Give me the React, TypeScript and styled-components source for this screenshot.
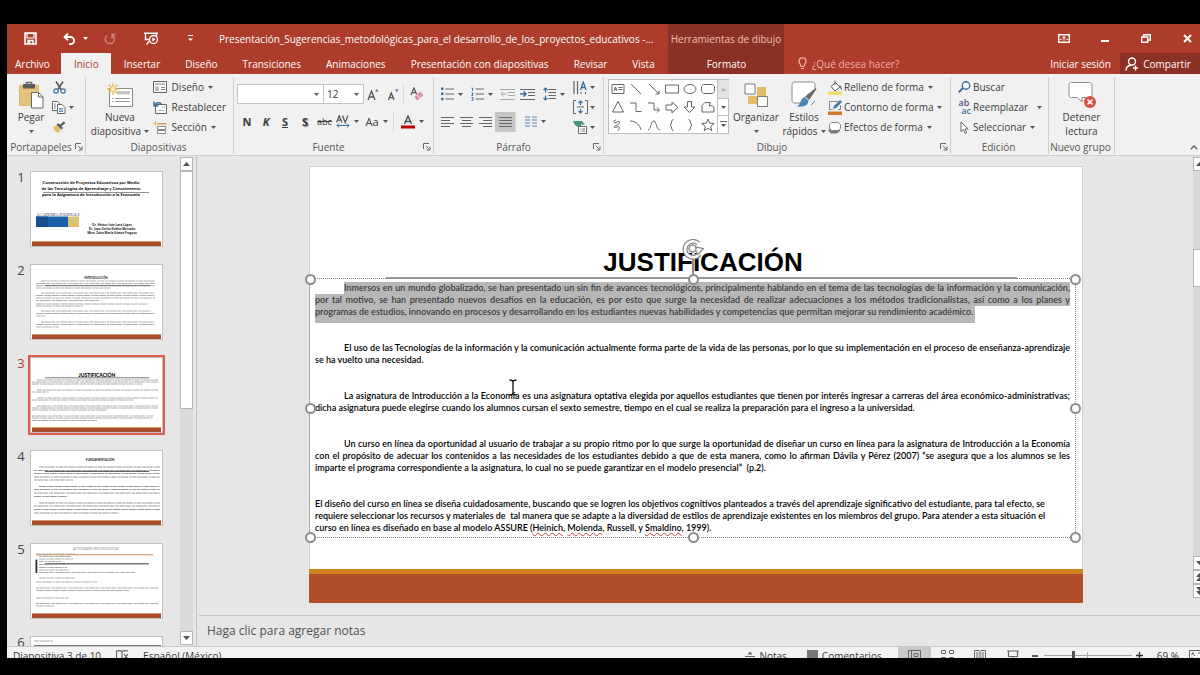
import React from 'react';
import styled, { createGlobalStyle, css } from 'styled-components';

const c = {
  red: '#ad3c2b',
  redDark: '#8b3024',
  ribbon: '#f1f1f1',
  work: '#e6e6e6',
  line: '#cfcfcf',
  ink: '#3b3b3b',
  icon: '#666666',
  blue: '#3d6f9e',
  gold: '#e3bd66',
  brick: '#b04e2b',
  ochre: '#cf8420',
};

const Global = createGlobalStyle`
  * { box-sizing: border-box; }
  body { margin: 0; background: #000; font-family: "Open Sans", "Noto Sans", sans-serif; font-size: 10px; line-height: 14px; color: ${c.ink}; }
  button, input, select, textarea { font: inherit; color: inherit; margin: 0; padding: 0; border: 0; background: none; border-radius: 0; outline: 0; }
  button { display: flex; align-items: center; justify-content: center; white-space: nowrap; }
  svg { display: block; flex: none; }
`;

/* ---------- frame ---------- */

const Page = styled.div`
  height: 100vh;
  padding: 24px 0 17px 7px;
  background: #000;
  overflow: hidden;
`;
const Window = styled.div`
  display: flex;
  flex-direction: column;
  height: 100%;
  background: ${c.work};
  overflow: hidden;
`;

/* ---------- header ---------- */

const Header = styled.header`
  display: grid;
  grid-template-columns: 661px 116px 1fr;
  grid-template-rows: 29px 21px;
  background: ${c.red};
  color: #fff;
`;
const QuickBar = styled.div`
  display: flex;
  align-items: center;
`;
const QuickButton = styled.button<{ $w: number; $dim?: boolean }>`
  width: ${(p) => p.$w}px;
  height: 28px;
  gap: 7px;
  opacity: ${(p) => (p.$dim ? 0.35 : 1)};
`;
const DocTitle = styled.h1`
  margin: 0 0 0 17px;
  font-size: 10px;
  line-height: 28px;
  font-weight: 400;
  white-space: nowrap;
`;
const Context = styled.div`
  grid-row: 1 / 3;
  grid-column: 2;
  display: grid;
  grid-template-rows: 29px 21px;
  justify-items: center;
  align-items: center;
  background: ${c.redDark};
  color: #f1c0b6;
`;
const WindowControls = styled.div`
  display: flex;
  justify-content: flex-end;
  align-items: center;
  gap: 15px;
`;
const WindowButton = styled.button`
  width: 26px;
  height: 28px;
`;
const Tabs = styled.nav`
  grid-row: 2;
  grid-column: 1;
  display: flex;
`;
const Tab = styled.button<{ $active?: boolean; $first?: boolean }>`
  padding: ${(p) => (p.$first ? '0 11px 0 8px' : '0 12px 0 13px')};
  height: 21px;
  color: #fff;
  ${(p) =>
    p.$active &&
    css`
      background: ${c.ribbon};
      color: ${c.red};
    `}
`;
const TabsRight = styled.div`
  display: flex;
  align-items: center;
  padding-left: 14px;
`;
const TellMe = styled.label`
  display: flex;
  align-items: center;
  gap: 5px;
  flex: 1;
  min-width: 0;
  input {
    width: 120px;
    height: 20px;
  }
  input::placeholder {
    color: #efb3a8;
    opacity: 1;
  }
`;
const Account = styled.button`
  margin-right: 9px;
`;
const Share = styled.button`
  width: 80px;
  height: 21px;
  gap: 4px;
  padding-right: 4px;
  background: ${c.redDark};
`;

/* ---------- ribbon ---------- */

const Ribbon = styled.div`
  display: flex;
  height: 82px;
  padding-top: 3px;
  background: ${c.ribbon};
  border-bottom: 1px solid ${c.line};
`;
const Group = styled.section<{ $w: number }>`
  position: relative;
  flex: none;
  display: flex;
  flex-direction: column;
  width: ${(p) => p.$w}px;
  border-right: 1px solid ${c.line};
  margin-bottom: 1px;
`;
const GroupBody = styled.div<{ $left?: number }>`
  display: flex;
  height: 64px;
  padding-left: ${(p) => p.$left ?? 0}px;
`;
const GroupFoot = styled.div`
  display: flex;
  align-items: center;
  height: 14px;
  padding-right: 2px;
  color: #555;
  span {
    flex: 1;
    text-align: center;
    white-space: nowrap;
  }
`;
const BigButton = styled.button<{ $w: number }>`
  flex-direction: column;
  justify-content: flex-start;
  width: ${(p) => p.$w}px;
  padding-top: 3px;
`;
const BigIcon = styled.span`
  display: flex;
  align-items: center;
  justify-content: center;
  height: 30px;
`;
const BigLine = styled.span`
  display: flex;
  align-items: center;
  justify-content: center;
  gap: 3px;
  height: 14px;
`;
const Stack = styled.div<{ $ml?: number }>`
  display: flex;
  flex-direction: column;
  margin-left: ${(p) => p.$ml ?? 0}px;
`;
const SmallButton = styled.button`
  justify-content: flex-start;
  height: 20px;
  gap: 4px;
`;
const SmallIcon = styled.span<{ $w?: number }>`
  display: flex;
  align-items: center;
  justify-content: center;
  width: ${(p) => p.$w ?? 14}px;
  margin-right: -2px;
`;
const Strip = styled.div<{ $h?: number }>`
  display: flex;
  align-items: center;
  height: ${(p) => p.$h ?? 28}px;
`;
const Tool = styled.button<{ $w: number; $on?: boolean }>`
  width: ${(p) => p.$w}px;
  height: 20px;
  gap: 4px;
  background: ${(p) => (p.$on ? '#c6c6c6' : 'none')};
`;
const Glyph = styled.span<{ $bold?: boolean; $italic?: boolean; $line?: string; $shadow?: boolean; $size?: number }>`
  font-size: ${(p) => p.$size ?? 11}px;
  font-weight: ${(p) => (p.$bold ? 700 : 400)};
  font-style: ${(p) => (p.$italic ? 'italic' : 'normal')};
  text-decoration: ${(p) => p.$line ?? 'none'};
  text-shadow: ${(p) => (p.$shadow ? '1px 1px 1px #888' : 'none')};
`;
const Rule = styled.i`
  width: 1px;
  height: 20px;
  background: #d8d8d8;
`;
const Combo = styled.div<{ $w: number }>`
  display: flex;
  align-items: center;
  width: ${(p) => p.$w}px;
  height: 20px;
  padding: 0 4px 0 3px;
  margin-right: -1px;
  background: #fff;
  border: 1px solid #c3c3c3;
  select {
    flex: 1;
    min-width: 0;
    appearance: none;
  }
`;
const Gallery = styled.div`
  display: grid;
  grid-template-columns: repeat(6, 18px) 12px;
  width: 121px;
  height: 55px;
  margin: 2px 3px 0 4px;
  background: #fff;
  border: 1px solid #bdbdbd;
`;
const Shapes = styled.div`
  grid-column: 1 / 7;
  display: grid;
  grid-template-columns: repeat(6, 18px);
  grid-auto-rows: 18px;
  button {
    width: 18px;
  }
`;
const GalleryScroll = styled.div`
  display: grid;
  grid-template-rows: 18px 17px 18px;
  border-left: 1px solid #bdbdbd;
  button + button {
    border-top: 1px solid #bdbdbd;
  }
  button:first-child {
    background: #e2e2e2;
  }
`;
const Collapse = styled.button`
  margin: auto 0 2px auto;
  width: 13px;
  height: 12px;
`;

/* ---------- work area ---------- */

const Work = styled.main`
  flex: 1;
  display: flex;
  min-height: 0;
`;
const Sidebar = styled.aside`
  flex: none;
  display: flex;
  width: 190px;
  border-right: 1px solid #c4c4c4;
`;
const ThumbList = styled.ol`
  flex: 1;
  display: flex;
  flex-direction: column;
  gap: 17px;
  margin: 0;
  padding: 15px 0 0;
  list-style: none;
  overflow: hidden;
`;
const ThumbItem = styled.li<{ $on?: boolean }>`
  flex: none;
  display: grid;
  grid-template-columns: 23px 133px;
  height: 76px;
  font-size: 13px;
  line-height: 12px;
  color: ${(p) => (p.$on ? '#c0392b' : '#444')};
  > span {
    justify-self: center;
    padding-left: 5px;
  }
`;
const Thumb = styled.button<{ $on?: boolean }>`
  width: 133px;
  height: 76px;
  background: #fff;
  border: 1px solid #c4bfb8;
  outline: ${(p) => (p.$on ? '2px solid #dc5d4b' : '0')};
`;
const Rail = styled.div`
  display: flex;
  flex-direction: column;
  width: 13px;
  margin: 1px 3px 1px 0;
  background: #d9d9d9;
`;
const RailButton = styled.button`
  flex: none;
  height: 14px;
  width: 13px;
  background: #fdfdfd;
  border: 1px solid #b5b5b5;
`;
const RailThumb = styled.div<{ $before?: number; $size: number; $after: number }>`
  flex: 1;
  display: grid;
  grid-template-rows: ${(p) => `${p.$before ?? 0}fr ${p.$size}fr ${p.$after}fr`};
  &::before {
    content: '';
    grid-row: 2;
    background: #fff;
    border: 1px solid #b5b5b5;
  }
`;
const Editor = styled.section`
  flex: 1;
  display: flex;
  flex-direction: column;
  min-width: 0;
  margin-left: 2px;
`;
const Canvas = styled.div`
  flex: 1;
  display: flex;
  min-height: 0;
`;
const Stage = styled.div`
  flex: 1;
  display: flex;
  justify-content: center;
  align-items: flex-start;
  padding-top: 10px;
`;
const ClippedRail = styled.div`
  flex: none;
  width: 7px;
  padding-bottom: 16px;
  overflow: hidden;
  display: flex;
`;
const Notes = styled.textarea`
  display: block;
  height: 31px;
  padding: 7px 8px;
  border-top: 1px solid #c4c4c4;
  font-size: 12px;
  line-height: 16px;
  resize: none;
  overflow: hidden;
  &::placeholder {
    color: #505050;
    opacity: 1;
  }
`;

/* ---------- slide ---------- */

const Slide = styled.article`
  display: flex;
  flex-direction: column;
  width: calc(100% - 220px);
  height: 437px;
  background: #fff;
  border: 1px solid #cfcfcf;
  color: #000;
`;
const SlideTitle = styled.h2`
  margin: 80px 65px 0 76px;
  padding-left: 3px;
  border-bottom: 2px solid #9c9c9c;
  font: 700 26px/30px 'Liberation Sans', Arial, sans-serif;
  text-align: center;
`;
const TextBox = styled.div`
  position: relative;
  display: flex;
  flex-direction: column;
  gap: 24px;
  height: 260px;
  margin: -1px 6px 0 -1px;
  padding: 3px 5px;
  border: 1px dotted #8a8a8a;
  font: 600 9px/12px Lato, Carlito, sans-serif;
`;
const Para = styled.p<{ $marked?: boolean }>`
  margin: 0;
  color: ${(p) => (p.$marked ? '#3c3c3c' : '#000')};
`;
const Line = styled.span<{ $indent?: boolean; $full?: boolean; $marked?: boolean; $tail?: boolean }>`
  display: block;
  white-space: pre-wrap;
  ${(p) =>
    p.$full &&
    css`
      text-align: justify;
      text-align-last: justify;
    `}
  ${(p) => p.$indent && 'margin-left: 29px;'}
  ${(p) => p.$marked && 'background: #b7b7b7;'}
  ${(p) =>
    p.$tail &&
    css`
      width: fit-content;
      padding: 0 2px 5px 0;
      margin-bottom: -5px;
    `}
`;
const Misspelt = styled.u`
  text-decoration: underline wavy #c8404a 1px;
  text-underline-offset: 1px;
`;
const Handle = styled.i<{ $x: number; $y: number }>`
  position: absolute;
  left: ${(p) => p.$x}%;
  top: ${(p) => p.$y}%;
  width: 11px;
  height: 11px;
  margin: -5px;
  background: #fff;
  border: 2px solid #8c8c8c;
  border-radius: 50%;
`;
const Rotator = styled.svg`
  position: absolute;
  left: 50%;
  top: -40px;
  margin-left: -11px;
`;
const Beam = styled.svg`
  position: absolute;
  left: 199px;
  top: 100px;
`;
const Floor = styled.div`
  margin: auto -1px -1px;
  height: 34px;
  background: ${c.brick};
  border-top: 5px solid ${c.ochre};
`;

/* ---------- status bar ---------- */

const Status = styled.footer`
  flex: none;
  height: 12px;
  background: #f3f3f3;
  border-top: 1px solid #c9c9c9;
  overflow: hidden;
`;
const StatusRow = styled.div`
  display: flex;
  align-items: center;
  height: 17px;
  padding-left: 6px;
`;
const StatusButton = styled.button<{ $w?: number; $on?: boolean; $mr?: number }>`
  height: 17px;
  gap: 4px;
  width: ${(p) => (p.$w ? `${p.$w}px` : 'auto')};
  margin-right: ${(p) => p.$mr ?? 0}px;
  background: ${(p) => (p.$on ? '#c9c9c9' : 'none')};
`;
const Spacer = styled.span`
  flex: 1;
`;
const Zoom = styled.input`
  appearance: none;
  width: 88px;
  height: 9px;
  margin: 0 4px;
  background: linear-gradient(#a5a5a5, #a5a5a5) 0 4px / 100% 1px no-repeat, linear-gradient(#a5a5a5, #a5a5a5) 50% 1px / 1px 7px no-repeat;
  &::-webkit-slider-thumb {
    appearance: none;
    width: 3px;
    height: 9px;
    background: #555;
  }
`;

/* ---------- icons ---------- */

type SvgProps = { w: number; h: number; children: React.ReactNode; s?: string };
const Svg = ({ w, h, children, s = c.icon }: SvgProps) => (
  <svg width={w} height={h} viewBox={`0 0 ${w} ${h}`} fill="none" stroke={s} aria-hidden="true">
    {children}
  </svg>
);
const Caret = ({ color = '#555' }: { color?: string }) => (
  <Svg w={5} h={3}>
    <path d="M0 0h5L2.500 3z" fill={color} stroke="none" />
  </Svg>
);
const Launcher = () => (
  <Svg w={8} h={8}>
    <path d="M.5 6V.5H6M3 3l3.500 3.500M7 3.500V7H3.500" />
  </Svg>
);
const SaveIcon = () => (
  <Svg w={13} h={13} s="#fff">
    <path d="M1 1h11v11H1z" strokeWidth="1.600" />
    <path d="M3 1.500h7V6H3z" fill={c.red} strokeWidth="1.200" />
    <path d="M4 12V8.500h5V12" strokeWidth="1.400" />
    <path d="M5.500 9v3" strokeWidth="1.500" />
  </Svg>
);
const UndoIcon = () => (
  <Svg w={13} h={12} s="#fff">
    <path d="M1.500 4h6a3.600 3.600 0 0 1 0 7.200H6M5 .8L1.600 4 5 7.200" strokeWidth="1.900" />
  </Svg>
);
const RedoIcon = () => (
  <Svg w={12} h={12} s="#fff">
    <path d="M8.500 2.200A4.600 4.600 0 1 1 3 2.400M8 6V1.600h3.500" strokeWidth="1.500" />
  </Svg>
);
const ShowIcon = () => (
  <Svg w={15} h={14} s="#fff">
    <path d="M0 1.200h14M1.500 1.500v6H5M12.500 1.500V4M2.500 12.500L5.500 9" strokeWidth="1.400" />
    <circle cx="9.500" cy="7.500" r="4" fill={c.red} strokeWidth="1.300" />
    <path d="M8.300 5.400v4.200l3.200-2.100z" fill="#fff" stroke="none" />
  </Svg>
);
const CustomizeIcon = () => (
  <Svg w={5} h={7} s="#fff">
    <path d="M0 .5h5" />
    <path d="M0 3.500h5L2.500 6z" fill="#fff" stroke="none" />
  </Svg>
);
const PasteIcon = () => (
  <Svg w={26} h={28}>
    <path d="M1.500 4.500h19v20h-19z" fill="#e5c27a" stroke="#e0b865" />
    <path d="M5 3h12v4.500H5z" fill="#5a5a5a" stroke="none" />
    <path d="M8.500 3.500V1.500h5v2" strokeWidth="1.500" />
    <path d="M13.500 11.500h7l4.500 4.500v11H13.500z" fill="#fff" />
    <path d="M20.500 11.500V16H25" />
  </Svg>
);
const CutIcon = () => (
  <Svg w={13} h={13}>
    <path d="M3 .5l5 8M10 .5l-5 8" strokeWidth="1.500" stroke="#555" />
    <circle cx="3" cy="10" r="2.200" stroke={c.blue} strokeWidth="1.200" />
    <circle cx="10" cy="10" r="2.200" stroke={c.blue} strokeWidth="1.200" />
  </Svg>
);
const CopyIcon = () => (
  <Svg w={14} h={13}>
    <path d="M.5.5h5L8 3v6.500H.5z" fill="#fff" />
    <path d="M5.500 3.500h4.500l3 3v6H5.500z" fill="#fff" />
    <path d="M2 3h2M2 5h2M2 7h2M7 7.500h4M7 9h4M7 10.500h4" stroke={c.blue} strokeWidth=".8" />
  </Svg>
);
const BrushIcon = () => (
  <Svg w={14} h={12}>
    <path d="M1 6l4-2 4 4-2 3.500c-3 .5-4-1-6-5.500z" fill={c.gold} stroke="none" />
    <path d="M4.500 3.500l5 5 1.500-1.500-1.800-1.800L13.500 2 11.800.6 8 3.800 6.200 2.200z" fill="#555" stroke="none" />
  </Svg>
);
const NewSlideIcon = () => (
  <Svg w={27} h={25}>
    <path d="M2.500 5.500h23v18h-23z" fill="#fff" stroke="#8a8a8a" />
    <path d="M10 8h13v3.500H10z" fill="#c6c6c6" stroke="none" />
    <path d="M5 15.500h1.500M8 15.500h15M5 18.500h1.500M8 18.500h15" stroke="#999" />
    <path d="M6 0v12M0 6h12M1.800 1.800l8.400 8.400M10.200 1.800l-8.400 8.400" stroke="#e6b94c" strokeWidth="1.300" />
    <circle cx="6" cy="6" r="2" fill="#fff3cf" stroke="none" />
  </Svg>
);
const LayoutIcon = () => (
  <Svg w={14} h={12}>
    <path d="M.5.5h13v11H.5z" fill="#fff" />
    <path d="M2 2h10v2H2zM2 5.500h4V10H2z" fill="#bcbcbc" stroke="none" />
    <path d="M8 6.500h4M8 8.500h4" stroke="#888" />
  </Svg>
);
const ResetIcon = () => (
  <Svg w={14} h={13}>
    <path d="M2.500 3.500h11v9h-11z" fill="#fff" />
    <path d="M5 9.500h6M9 6h3" stroke="#aaa" />
    <path d="M1 .5V5h4.500M1.500 4.500C3 1.500 6 .8 8.500 3" stroke={c.blue} strokeWidth="1.400" />
  </Svg>
);
const SectionIcon = () => (
  <Svg w={14} h={13}>
    <path d="M4 2.800h9.500" stroke="#d98c3d" strokeWidth="1.400" />
    <path d="M4.500 5.500h8v3h-8zM4.500 9.500h8v3h-8z" fill="#fff" stroke="#888" />
    <path d="M2.500 0v5M0 2.500h5" stroke={c.gold} strokeWidth="1.200" />
  </Svg>
);
const EraserIcon = () => (
  <Svg w={14} h={14}>
    <path d="M1 8l3-7 3 7M2 5.600h4" strokeWidth="1.200" stroke="#555" />
    <path d="M4.500 9.500l5.500-5 3.500 3.500-5.500 5H6.500z" fill="#dd8fa0" stroke="none" />
    <path d="M6.500 7.500l3.500 4" stroke="#fff" />
  </Svg>
);
const ListIcon = ({ numbers }: { numbers?: boolean }) => (
  <Svg w={13} h={14}>
    {numbers ? (
      <path d="M.5 1h1v3M.5 6h1.500v1l-1.500 1.500H2M.5 10.500H2v2.800H.5" stroke={c.blue} />
    ) : (
      <path d="M0 .5h2.500V3H0zM0 5.600h2.500v2.500H0zM0 10.800h2.500v2.500H0z" fill={c.blue} stroke="none" />
    )}
    <path d="M4.500 2H13M4.500 7H13M4.500 12H13" stroke="#666" />
  </Svg>
);
const IndentIcon = ({ out }: { out?: boolean }) => (
  <Svg w={15} h={13} s={out ? '#a8a8a8' : '#666'}>
    <path d="M0 1.500h15M8 4.500h7M8 7.500h7M0 11.500h15" />
    {out ? <path d="M7 6H1M3.500 3.500L1 6l2.500 2.500" /> : <path d="M0 6h6M3.500 3.500L6 6 3.500 8.500" stroke={c.blue} strokeWidth="1.500" />}
  </Svg>
);
const SpacingIcon = () => (
  <Svg w={13} h={14}>
    <path d="M5.500 2.500H13M5.500 5.500H13M5.500 8.500H13M5.500 11.500H13" />
    <path d="M2.500 1v4.500M.5 3l2-2 2 2M2.500 8.500V13M.5 11l2 2 2-2" stroke={c.blue} strokeWidth="1.200" />
  </Svg>
);
const AlignIcon = ({ kind }: { kind: 'l' | 'c' | 'r' | 'j' }) => {
  const d = {
    l: 'M0 .5h13M0 3.500h9M0 6.500h13M0 9.500h9',
    c: 'M0 .5h13M2 3.500h9M0 6.500h13M2 9.500h9',
    r: 'M0 .5h13M4 3.500h9M0 6.500h13M4 9.500h9',
    j: 'M0 .5h13M0 3.500h13M0 6.500h13M0 9.500h13',
  }[kind];
  return (
    <Svg w={13} h={10}>
      <path d={d} />
    </Svg>
  );
};
const ColumnsIcon = () => (
  <Svg w={12} h={11}>
    <path d="M0 1h5M7 1h5M0 4h5M7 4h5M0 7h5M7 7h5M0 10h5M7 10h5" stroke="#5c86ad" strokeWidth="1.200" />
  </Svg>
);
const DirectionIcon = () => (
  <Svg w={14} h={13}>
    <path d="M1 0v13M4.500 0v13" strokeWidth="1.200" />
    <path d="M7.500 9l2.800-8 2.700 8M8.300 6.500h4" stroke={c.blue} strokeWidth="1.300" />
    <path d="M8 13v-2M12.500 13v-2" />
  </Svg>
);
const AnchorIcon = () => (
  <Svg w={15} h={14}>
    <path d="M3 .5H.5v13H3M12 .5h2.500v13H12" />
    <path d="M4 7h7" />
    <path d="M7.500 1v4M5.500 3l2-2 2 2M7.500 13V9M5.500 11l2 2 2-2" stroke={c.blue} strokeWidth="1.200" />
  </Svg>
);
const SmartIcon = () => (
  <Svg w={15} h={14}>
    <path d="M0 1h9l3 3.500H8V7H5L2 5z" fill="#4b9474" stroke="none" />
    <path d="M5.500 6.500h8v7h-8z" fill="#fff" />
    <path d="M7.500 9h1M7.500 11h1M9.500 9H12M9.500 11H12" />
  </Svg>
);
const shapePaths = [
  'M2 3.500h12v9H2zM4 10l1.500-4L7 10M8.500 6.500h4M8.500 8.500h4M4.500 8.500h2',
  'M3 3l10 10',
  'M3 3l10 10M13 9.500V13H9.500',
  'M1.500 4h13v8h-13z',
  'M2 8a6 4.500 0 1 0 12 0A6 4.500 0 1 0 2 8z',
  'M3.500 3.500h9l2 2v5l-2 2h-9l-2-2v-5z',
  'M8 2.500l5.500 10.500h-11z',
  'M2 4h6v8.500h5.500',
  'M2 4h6v7h5M11 8.500l2.500 2.500L11 13.500',
  'M2 6h6V3l6 5.500L8 14v-3H2z',
  'M5.500 2.500h4V8h3.500l-5.500 5.500L2 8h3.500z',
  'M2 13V6.500l3-3h5.500L9 7c3-1 4.500 0 5 2v4z',
  'M6 3C2 4 4 7 7 5s4 1 0 3-4 3 0 2 2 2 1 4',
  'M2 4c6 0 10 4 11 9',
  'M2 13c3 0 3-10 6-9s2 9 6 9',
  'M9.500 2.500c-3 0-1 5-3.500 5.500 2.500.5.500 5.500 3.500 5.500',
  'M6.500 2.500c3 0 1 5 3.500 5.500-2.500.5-.5 5.500-3.500 5.500',
  'M8 2l1.700 4.200 4.500.3-3.500 2.900 1.200 4.300L8 11.300l-3.900 2.400 1.200-4.300L1.800 6.500l4.500-.3z',
];
const ArrangeIcon = () => (
  <Svg w={25} h={25}>
    <path d="M13 4h9v9h-9zM4 13h9v8H4z" fill={c.gold} stroke="none" />
    <path d="M1 1h10v10H1zM13.500 13.500h10v10h-10z" fill="#fff" stroke="#7d7d7d" />
  </Svg>
);
const StylesIcon = () => (
  <Svg w={26} h={28}>
    <path d="M13 22H4c-2 0-3-1-3-3V4c0-2 1-3 3-3h17c2 0 3 1 3 3v4" fill="#fff" stroke="#8a8a8a" />
    <path d="M24.500 7l1 1-7.500 11-4-3.500z" fill="#6b6b6b" stroke="none" />
    <path d="M13.500 16l4 3.500c0 4-3.500 7-11.500 6 4-2 3-8 7.500-9.500z" fill="#4c86b5" stroke="none" />
    <path d="M20 24l4-4" stroke="#4c86b5" />
  </Svg>
);
const FillIcon = () => (
  <Svg w={15} h={15}>
    <path d="M3 6.500l4.500-4L12 7l-5 4z" fill="#fff" stroke="#555" />
    <path d="M7 .5v4.500" />
    <path d="M11.500 5c2 1 2.500 2.500 2.500 5-1.500-.5-2-2-2.500-5z" fill="#4c86b5" stroke="none" />
    <path d="M0 11.500h14V15H0z" fill="#f0dc6a" stroke="none" />
  </Svg>
);
const OutlineIcon = () => (
  <Svg w={15} h={15}>
    <path d="M10 1.500H1.500v8h3M12.500 5v4.500H10" stroke="#888" />
    <path d="M5 9l1-3 6-6 2 2-6 6z" fill="#3f79ab" stroke="none" />
    <path d="M0 11.500h14V15H0z" fill="#cc7a2a" stroke="none" />
  </Svg>
);
const EffectsIcon = () => (
  <Svg w={14} h={13}>
    <path d="M2 4h10v6l-3 2.500H3L.5 10z" fill="#777" stroke="none" />
    <path d="M3.500 1.500h7l2 2v4l-2 2h-7l-2-2v-4z" fill="#fff" stroke="#888" />
  </Svg>
);
const FindIcon = () => (
  <Svg w={13} h={12}>
    <circle cx="8" cy="4.500" r="3.700" stroke={c.blue} strokeWidth="1.400" fill="#fff" />
    <path d="M5 7L.8 11.200" stroke={c.blue} strokeWidth="2" />
  </Svg>
);
const ReplaceGlyph = styled.span`
  display: grid;
  width: 14px;
  font-size: 9px;
  line-height: 8px;
  font-weight: 600;
  color: #5f4a86;
  span + span {
    justify-self: end;
    color: ${c.blue};
  }
`;
const PointerIcon = () => (
  <Svg w={9} h={13}>
    <path d="M1 1v9.500l2.500-2 1.600 3.800 1.500-.7L5 8h3.200z" fill="#fff" stroke="#666" />
  </Svg>
);
const StopIcon = () => (
  <Svg w={28} h={28}>
    <path d="M3.500 1.500h18c1.500 0 2.500 1 2.500 2.500v10c0 1.500-1 2.500-2.500 2.500H14v4.500L9.500 16.500h-6C2 16.500 1 15.500 1 14V4c0-1.500 1-2.500 2.500-2.500z" fill="#fff" stroke="#8f8f8f" />
    <circle cx="22" cy="21" r="6" fill="#d2503f" stroke="none" />
    <path d="M19.500 18.500l5 5M24.500 18.500l-5 5" stroke="#fff" strokeWidth="1.600" />
  </Svg>
);
const BulbIcon = () => (
  <Svg w={9} h={13} s="#efb3a8">
    <path d="M3 9.500C3 7.500 1 6.500 1 4.300a3.500 3.500 0 0 1 7 0C8 6.500 6 7.500 6 9.500zM3 11.500h3" strokeWidth="1.200" />
  </Svg>
);
const PersonIcon = () => (
  <Svg w={14} h={14} s="#fff">
    <circle cx="7" cy="4.500" r="3.500" strokeWidth="1.400" />
    <path d="M1 13.500C1 10.500 3 8.500 6 8.200M10.500 8.500v5M8 11h5" strokeWidth="1.400" />
  </Svg>
);
const DisplayIcon = () => (
  <Svg w={12} h={9} s="#fff">
    <path d="M.7.7h10.600v7.600H.7z" strokeWidth="1.400" />
    <path d="M6 2.500v4M4.200 4.200L6 2.500l1.800 1.700M2 5.500h1.500M8.500 5.500H10" />
  </Svg>
);
const RestoreIcon = () => (
  <Svg w={10} h={9} s="#fff">
    <path d="M.7 3h6v5.300h-6zM2.800 3V.8h6.500V6H7" strokeWidth="1.400" />
  </Svg>
);
const CloseIcon = () => (
  <Svg w={9} h={9} s="#fff">
    <path d="M1 1l7 7M8 1L1 8" strokeWidth="2" />
  </Svg>
);
const SpellIcon = () => (
  <Svg w={13} h={12}>
    <path d="M6 1.500C4 .5 2 .5.500 1v9.500C2 10 4 10 6 11V1.500C7.500.5 10 .5 12 1M8 4l4 5M12 4L8 9" strokeWidth="1.200" />
  </Svg>
);

/* ---------- slide miniatures ---------- */

type Row = [number, number, number];
const Greek = ({ rows, tone = '#a3a3a3' }: { rows: Row[]; tone?: string }) => (
  <g stroke={tone} strokeWidth=".9">
    {rows.map(([x1, x2, y], i) => (
      <path key={y} d={`M${x1} ${y}H${x2}`} strokeDasharray={['5 .7 3 .5 7 .7 2 .6', '3 .6 6 .5 4 .8 1 .5', '7 .8 2 .4 5 .6'][i % 3]} />
    ))}
  </g>
);
const Base = () => (
  <g stroke="none">
    <path d="M1 69h129v1.500H1z" fill="#d79a6a" />
    <path d="M1 70h129v4H1z" fill="#a94d2c" />
  </g>
);
const Mini = ({ children }: { children: React.ReactNode }) => (
  <svg width="131" height="74" viewBox="0 0 131 74" fill="none" fontFamily="Lato, sans-serif" textAnchor="middle">
    {children}
  </svg>
);
const label = { fill: '#222', stroke: 'none', fontWeight: 700 };

const minis = [
  <Mini key="1">
    <g {...label} fill="#111" fontSize="4" fontFamily="Open Sans, sans-serif">
      <text x="60" y="12">Construcción de Proyectos Educativos por Medio</text>
      <text x="60" y="18">de las Tecnologías de Aprendizaje y Conocimiento</text>
      <text x="60" y="24">para la Asignatura de Introducción a la Economía</text>
    </g>
    <path d="M12 20.500h106" stroke="#777" strokeWidth=".8" />
    <text x="27" y="44" fontSize="4" fill="#335" fontFamily="Liberation Serif, serif">ACADEMIA JOURNALS</text>
    <path d="M5 44.500h32V55H5z" fill="#1b5fa8" />
    <path d="M5 44.500h12V55H5z" fill="#164f8f" />
    <path d="M37 44.500h11V55H37z" fill="#dcc170" />
    <g {...label} fontSize="3" fontFamily="Open Sans, sans-serif">
      <text x="81" y="54">Dr. Héctor Iván Lara López</text>
      <text x="81" y="58">Dr. Juan Carlos Robles Mercado</text>
      <text x="81" y="62">Mtra. Zaira María Gómez Fregoso</text>
    </g>
    <Base />
  </Mini>,
  <Mini key="2">
    <text {...label} x="65" y="14" fontSize="3">INTRODUCCIÓN</text>
    <Greek rows={[[10, 124, 16], [5, 124, 18.5], [5, 124, 20.8], [5, 80, 23], [10, 124, 28], [5, 124, 30.5], [5, 124, 33], [5, 68, 35.500], [5, 117, 39], [5, 52, 41], [10, 120, 46], [5, 124, 48.500], [5, 14, 51], [10, 124, 57], [5, 124, 59.500], [5, 28, 62]]} />
    <path d="M14 20.500h105" stroke="#777" />
    <Base />
  </Mini>,
  <Mini key="3">
    <text {...label} fill="#000" x="66" y="19" fontSize="5" fontWeight={900}>JUSTIFICACIÓN</text>
    <path d="M14 19.800h104" stroke="#555" strokeWidth=".8" />
    <Greek rows={[[6, 127, 22], [1, 127, 24], [1, 112, 26], [6, 127, 32], [1, 18, 34], [6, 127, 40], [1, 102, 42], [6, 127, 48], [1, 127, 50], [1, 76, 52], [1, 122, 58], [1, 122, 60], [1, 66, 62.500]]} />
    <Base />
  </Mini>,
  <Mini key="4">
    <text {...label} x="69" y="10" fontSize="3">FUNDAMENTACIÓN</text>
    <Greek tone="#8e8e8e" rows={[[8, 129, 16], [3, 129, 19.500], [3, 129, 22.500], [3, 129, 26], [3, 42, 29], [8, 129, 35.500], [3, 129, 38.500], [3, 129, 42], [3, 36, 45.500], [8, 129, 52], [3, 129, 55], [3, 129, 58.500], [3, 88, 62]]} />
    <path d="M14 20.500h104" stroke="#666" />
    <Base />
  </Mini>,
  <Mini key="5">
    <text x="65" y="6" fontSize="3" fill="#888">ACTIVIDADES METODOLÓGICAS</text>
    <path d="M5 10.800h117" stroke="#c98b52" />
    <path d="M14 19.800h104" stroke="#777" strokeWidth="1.400" />
    <path d="M4.500 15.500h1.800V29H4.500z" fill="#332b20" />
    <Greek rows={[[5, 44, 10], [8, 40, 12.500], [8, 42, 15], [8, 30, 17.500], [8, 34, 20.500], [8, 36, 23.500], [8, 38, 26], [8, 105, 28.500], [8, 44, 34], [5, 66, 38], [5, 127, 44], [5, 98, 46.500], [5, 38, 54], [5, 127, 59.500], [5, 23, 62]]} />
    <Base />
  </Mini>,
  <Mini key="6">
    <Greek rows={[[3, 22, 4], [3, 60, 11.500]]} />
    <path d="M3 8.500h127" stroke="#777" />
  </Mini>,
];

/* ---------- app ---------- */

const tabs = ['Archivo', 'Inicio', 'Insertar', 'Diseño', 'Transiciones', 'Animaciones', 'Presentación con diapositivas', 'Revisar', 'Vista'];

const Foot = ({ text, launch }: { text: string; launch?: boolean }) => (
  <GroupFoot>
    <span>{text}</span>
    {launch && (
      <button aria-label={`Más opciones de ${text}`}>
        <Launcher />
      </button>
    )}
  </GroupFoot>
);

export default function App() {
  return (
    <Page>
      <Global />
      <Window>
        <Header>
          <QuickBar>
            <QuickButton $w={47} aria-label="Guardar"><SaveIcon /></QuickButton>
            <QuickButton $w={42} aria-label="Deshacer"><UndoIcon /><Caret color="#fff" /></QuickButton>
            <QuickButton $w={28} $dim aria-label="Rehacer"><RedoIcon /></QuickButton>
            <QuickButton $w={54} aria-label="Presentar"><ShowIcon /></QuickButton>
            <QuickButton $w={24} aria-label="Personalizar"><CustomizeIcon /></QuickButton>
            <DocTitle>Presentación_Sugerencias_metodológicas_para_el desarrollo_de_los_proyectos_educativos -...</DocTitle>
          </QuickBar>
          <Context>
            <span>Herramientas de dibujo</span>
            <Tab>Formato</Tab>
          </Context>
          <WindowControls>
            <WindowButton aria-label="Opciones de la cinta"><DisplayIcon /></WindowButton>
            <WindowButton aria-label="Minimizar">
              <Svg w={8} h={6} s="#fff"><path d="M0 5h8" strokeWidth="2" /></Svg>
            </WindowButton>
            <WindowButton aria-label="Restaurar"><RestoreIcon /></WindowButton>
            <WindowButton aria-label="Cerrar"><CloseIcon /></WindowButton>
          </WindowControls>
          <Tabs>
            {tabs.map((t, i) => (
              <Tab key={t} $first={i === 0} $active={t === 'Inicio'}>{t}</Tab>
            ))}
          </Tabs>
          <TabsRight>
            <TellMe>
              <BulbIcon />
              <input aria-label="¿Qué desea hacer?" placeholder="¿Qué desea hacer?" />
            </TellMe>
            <Account>Iniciar sesión</Account>
            <Share><PersonIcon />Compartir</Share>
          </TabsRight>
        </Header>

        <Ribbon>
          <Group $w={79}>
            <GroupBody $left={4}>
              <BigButton $w={40}>
                <BigIcon><PasteIcon /></BigIcon>
                <BigLine>Pegar</BigLine>
                <BigLine><Caret /></BigLine>
              </BigButton>
              <Stack>
                <SmallButton aria-label="Cortar"><SmallIcon $w={16}><CutIcon /></SmallIcon></SmallButton>
                <SmallButton aria-label="Copiar"><SmallIcon $w={16}><CopyIcon /></SmallIcon><Caret /></SmallButton>
                <SmallButton aria-label="Copiar formato"><SmallIcon $w={16}><BrushIcon /></SmallIcon></SmallButton>
              </Stack>
            </GroupBody>
            <Foot text="Portapapeles" launch />
          </Group>

          <Group $w={148}>
            <GroupBody $left={2}>
              <BigButton $w={64}>
                <BigIcon><NewSlideIcon /></BigIcon>
                <BigLine>Nueva</BigLine>
                <BigLine>diapositiva <Caret /></BigLine>
              </BigButton>
              <Stack $ml={1}>
                <SmallButton><SmallIcon><LayoutIcon /></SmallIcon>&nbsp;Diseño <Caret /></SmallButton>
                <SmallButton><SmallIcon><ResetIcon /></SmallIcon>&nbsp;Restablecer</SmallButton>
                <SmallButton><SmallIcon><SectionIcon /></SmallIcon>&nbsp;Sección <Caret /></SmallButton>
              </Stack>
            </GroupBody>
            <Foot text="Diapositivas" />
          </Group>

          <Group $w={200}>
            <GroupBody $left={3}>
              <Stack>
                <Strip $h={34}>
                  <Combo $w={87}>
                    <select aria-label="Fuente"><option></option></select>
                    <Caret />
                  </Combo>
                  <Combo $w={41}>
                    <select aria-label="Tamaño de fuente"><option>12</option></select>
                    <Caret />
                  </Combo>
                  <Tool $w={20} aria-label="Aumentar tamaño">
                    <Svg w={12} h={13}><path d="M1 12l3.500-9L8 12M2.200 9h4.600" stroke="#555" strokeWidth="1.300" /><path d="M8 3.500L9.800 1l1.800 2.500z" fill={c.blue} stroke="none" /></Svg>
                  </Tool>
                  <Tool $w={20} aria-label="Reducir tamaño">
                    <Svg w={12} h={13}><path d="M1.500 12l2.800-7 2.800 7M2.600 9.600h3.500" stroke="#555" strokeWidth="1.300" /><path d="M8 1.500h3.500L9.800 4z" fill={c.blue} stroke="none" /></Svg>
                  </Tool>
                  <Rule />
                  <Tool $w={26} aria-label="Borrar formato"><EraserIcon /></Tool>
                </Strip>
                <Strip $h={21}>
                  <Tool $w={20}><Glyph $bold>N</Glyph></Tool>
                  <Tool $w={18}><Glyph $bold $italic>K</Glyph></Tool>
                  <Tool $w={20}><Glyph $bold $line="underline">S</Glyph></Tool>
                  <Tool $w={20}><Glyph $bold $shadow>S</Glyph></Tool>
                  <Tool $w={19}><Glyph $size={9} $line="line-through">abc</Glyph></Tool>
                  <Tool $w={26} aria-label="Espaciado">
                    <Svg w={14} h={13}><path d="M.5 7.500l2.700-7 2.700 7M1.500 5.200h3.400M6.500.5l2.700 7 2.700-7" stroke="#555" strokeWidth="1.200" /><path d="M1 10.500h12M3 8.500l-2 2 2 2M11 8.500l2 2-2 2" stroke={c.blue} /></Svg>
                    <Caret />
                  </Tool>
                  <Tool $w={33}><Glyph>Aa</Glyph><Caret /></Tool>
                  <Rule />
                  <Tool $w={37} aria-label="Color de fuente">
                    <Svg w={14} h={14}><path d="M3.500 9L7 1l3.500 8M4.600 6.500h4.800" stroke="#555" strokeWidth="1.500" /><path d="M0 10.500h14v3H0z" fill="#c00000" stroke="none" /></Svg>
                    <Caret />
                  </Tool>
                </Strip>
              </Stack>
            </GroupBody>
            <Foot text="Fuente" launch />
          </Group>

          <Group $w={170}>
            <GroupBody $left={4}>
              <Stack>
                <Strip $h={34}>
                  <Tool $w={28} aria-label="Viñetas"><ListIcon /><Caret /></Tool>
                  <Tool $w={31} aria-label="Numeración"><ListIcon numbers /><Caret /></Tool>
                  <Tool $w={20} aria-label="Disminuir sangría"><IndentIcon out /></Tool>
                  <Tool $w={20} aria-label="Aumentar sangría"><IndentIcon /></Tool>
                  <Tool $w={34} aria-label="Interlineado"><SpacingIcon /><Caret /></Tool>
                </Strip>
                <Strip $h={21}>
                  <Tool $w={19} aria-label="Izquierda"><AlignIcon kind="l" /></Tool>
                  <Tool $w={19} aria-label="Centrar"><AlignIcon kind="c" /></Tool>
                  <Tool $w={19} aria-label="Derecha"><AlignIcon kind="r" /></Tool>
                  <Tool $w={20} $on aria-label="Justificar"><AlignIcon kind="j" /></Tool>
                  <Rule />
                  <Tool $w={38} aria-label="Columnas"><ColumnsIcon /><Caret /></Tool>
                </Strip>
              </Stack>
              <Stack $ml={1}>
                <SmallButton aria-label="Dirección del texto"><SmallIcon $w={16}><DirectionIcon /></SmallIcon><Caret /></SmallButton>
                <SmallButton aria-label="Alinear texto"><SmallIcon $w={16}><AnchorIcon /></SmallIcon><Caret /></SmallButton>
                <SmallButton aria-label="SmartArt"><SmallIcon $w={16}><SmartIcon /></SmallIcon><Caret /></SmallButton>
              </Stack>
            </GroupBody>
            <Foot text="Párrafo" launch />
          </Group>

          <Group $w={347}>
            <GroupBody>
              <Gallery>
                <Shapes>
                  {shapePaths.map((d) => (
                    <button key={d} aria-label="Forma"><Svg w={16} h={16}><path d={d} /></Svg></button>
                  ))}
                </Shapes>
                <GalleryScroll>
                  <button aria-label="Anterior"><Svg w={5} h={3}><path d="M0 3h5L2.500 0z" fill="#aaa" stroke="none" /></Svg></button>
                  <button aria-label="Siguiente"><Caret /></button>
                  <button aria-label="Más"><Svg w={7} h={7}><path d="M0 .5h7" /><path d="M1 3h5L3.500 6z" fill="#555" stroke="none" /></Svg></button>
                </GalleryScroll>
              </Gallery>
              <BigButton $w={48}>
                <BigIcon><ArrangeIcon /></BigIcon>
                <BigLine>Organizar</BigLine>
                <BigLine><Caret /></BigLine>
              </BigButton>
              <BigButton $w={48}>
                <BigIcon><StylesIcon /></BigIcon>
                <BigLine>Estilos</BigLine>
                <BigLine>rápidos <Caret /></BigLine>
              </BigButton>
              <Stack>
                <SmallButton><SmallIcon><FillIcon /></SmallIcon>Relleno de forma <Caret /></SmallButton>
                <SmallButton><SmallIcon><OutlineIcon /></SmallIcon>Contorno de forma <Caret /></SmallButton>
                <SmallButton><SmallIcon><EffectsIcon /></SmallIcon>Efectos de forma <Caret /></SmallButton>
              </Stack>
            </GroupBody>
            <Foot text="Dibujo" launch />
          </Group>

          <Group $w={98}>
            <GroupBody $left={6}>
              <Stack>
                <SmallButton><SmallIcon><FindIcon /></SmallIcon>Buscar</SmallButton>
                <SmallButton>
                  <SmallIcon><ReplaceGlyph aria-hidden="true"><span>ab</span><span>ac</span></ReplaceGlyph></SmallIcon>
                  Reemplazar &nbsp;<Caret />
                </SmallButton>
                <SmallButton><SmallIcon><PointerIcon /></SmallIcon>Seleccionar <Caret /></SmallButton>
              </Stack>
            </GroupBody>
            <Foot text="Edición" />
          </Group>

          <Group $w={66}>
            <GroupBody>
              <BigButton $w={66}>
                <BigIcon><StopIcon /></BigIcon>
                <BigLine>Detener</BigLine>
                <BigLine>lectura</BigLine>
              </BigButton>
            </GroupBody>
            <Foot text="Nuevo grupo" />
          </Group>
          <Collapse aria-label="Contraer la cinta">
            <Svg w={8} h={5}><path d="M.8 4.200L4 1l3.200 3.200" strokeWidth="1.500" /></Svg>
          </Collapse>
        </Ribbon>

        <Work>
          <Sidebar>
            <ThumbList>
              {minis.map((m, i) => (
                <ThumbItem key={i} $on={i === 2}>
                  <span>{i + 1}</span>
                  <Thumb $on={i === 2} aria-label={`Diapositiva ${i + 1}`}>{m}</Thumb>
                </ThumbItem>
              ))}
            </ThumbList>
            <Rail>
              <RailButton aria-label="Subir"><Svg w={7} h={4}><path d="M0 4h7L3.500 0z" fill="#555" stroke="none" /></Svg></RailButton>
              <RailThumb $size={238} $after={222} />
              <RailButton aria-label="Bajar"><Svg w={7} h={4}><path d="M0 0h7L3.500 4z" fill="#555" stroke="none" /></Svg></RailButton>
            </Rail>
          </Sidebar>
          <Editor>
            <Canvas>
              <Stage>
                <Slide>
                  <SlideTitle>JUSTIFICACIÓN</SlideTitle>
                  <TextBox>
                    <Para $marked>
                      <Line $full $indent $marked>Inmersos en un mundo globalizado, se han presentado un sin fin de avances tecnológicos, principalmente hablando en el tema de las tecnologías de la información y la comunicación,</Line>
                      <Line $full $marked>por tal motivo, se han presentado nuevos desafíos en la educación, es por esto que surge la necesidad de realizar adecuaciones a los métodos tradicionalistas, así como a los planes y</Line>
                      <Line $marked $tail>programas de estudios, innovando en procesos y desarrollando en los estudiantes nuevas habilidades y competencias que permitan mejorar su rendimiento académico.</Line>
                    </Para>
                    <Para>
                      <Line $full $indent>El uso de las Tecnologías de la información y la comunicación actualmente forma parte de la vida de las personas, por lo que su implementación en el proceso de enseñanza-aprendizaje</Line>
                      <Line>se ha vuelto una necesidad.</Line>
                    </Para>
                    <Para>
                      <Line $full $indent>La asignatura de Introducción a la Economía es una asignatura optativa elegida por aquellos estudiantes que tienen por interés ingresar a carreras del área económico-administrativas;</Line>
                      <Line>dicha asignatura puede elegirse cuando los alumnos cursan el sexto semestre, tiempo en el cual se realiza la preparación para el ingreso a la universidad.</Line>
                    </Para>
                    <Para>
                      <Line $full $indent>Un curso en línea da oportunidad al usuario de trabajar a su propio ritmo por lo que surge la oportunidad de diseñar un curso en línea para la asignatura de Introducción a la Economía</Line>
                      <Line $full>con el propósito de adecuar los contenidos a las necesidades de los estudiantes debido a que de esta manera, como lo afirman Dávila y Pérez (2007) “se asegura que a los alumnos se les</Line>
                      <Line>imparte el programa correspondiente a la asignatura, lo cual no se puede garantizar en el modelo presencial”  (p.2).</Line>
                    </Para>
                    <Para>
                      <Line>El diseño del curso en línea se diseña cuidadosamente, buscando que se logren los objetivos cognitivos planteados a través del aprendizaje significativo del estudiante, para tal efecto, se</Line>
                      <Line>requiere seleccionar los recursos y materiales de  tal manera que se adapte a la diversidad de estilos de aprendizaje existentes en los miembros del grupo. Para atender a esta situación el</Line>
                      <Line>curso en línea es diseñado en base al modelo ASSURE (<Misspelt>Heinich</Misspelt>, <Misspelt>Molenda</Misspelt>, Russell, y <Misspelt>Smaldino</Misspelt>, 1999).</Line>
                    </Para>
                    <Rotator width="22" height="40" viewBox="0 0 22 40" fill="none" stroke="#8c8c8c" aria-hidden="true">
                      <path d="M11 19v18" strokeWidth="2" />
                      <path d="M16.500 4.500A8 8 0 1 0 17.500 15" stroke="#8c8c8c" strokeWidth="5" />
                      <path d="M16.500 4.500A8 8 0 1 0 17.500 15" stroke="#fff" strokeWidth="2.500" />
                      <path d="M11 7.500l10.500 2-5.500 6z" fill="#fff" strokeWidth="1.300" />
                      <circle cx="10.500" cy="9.500" r="3.500" strokeWidth="1.500" fill="#fff" />
                    </Rotator>
                    {[[0, 0], [50, 0], [100, 0], [0, 50], [100, 50], [0, 100], [50, 100], [100, 100]].map(([x, y]) => (
                      <Handle key={`${x}-${y}`} $x={x} $y={y} />
                    ))}
                    <Beam width="8" height="17" viewBox="0 0 8 17" fill="none" stroke="#111" aria-hidden="true">
                      <path d="M.5 1c2 0 3.500.5 3.500 2v11c0 1.500-1.500 2-3.500 2M7.500 1C5.500 1 4 1.500 4 3M7.500 16C5.500 16 4 15.500 4 14" strokeWidth="1.300" />
                    </Beam>
                  </TextBox>
                  <Floor />
                </Slide>
              </Stage>
              <ClippedRail>
                <Rail>
                  <RailButton aria-label="Subir"><Svg w={7} h={4}><path d="M0 4h7L3.500 0z" fill="#555" stroke="none" /></Svg></RailButton>
                  <RailThumb $before={77} $size={38} $after={267} />
                  <RailButton aria-label="Bajar"><Svg w={7} h={4}><path d="M0 0h7L3.500 4z" fill="#555" stroke="none" /></Svg></RailButton>
                  <RailButton aria-label="Diapositiva anterior"><Svg w={7} h={8}><path d="M0 4h7L3.500 0zM0 8h7L3.500 4z" fill="#555" stroke="none" /></Svg></RailButton>
                  <RailButton aria-label="Diapositiva siguiente"><Svg w={7} h={8}><path d="M0 0h7L3.500 4zM0 4h7L3.500 8z" fill="#555" stroke="none" /></Svg></RailButton>
                </Rail>
              </ClippedRail>
            </Canvas>
            <Notes aria-label="Notas" placeholder="Haga clic para agregar notas" />
          </Editor>
        </Work>

        <Status>
          <StatusRow>
            <StatusButton $mr={15}>Diapositiva 3 de 10</StatusButton>
            <StatusButton $mr={14} aria-label="Ortografía"><SpellIcon /></StatusButton>
            <StatusButton>Español (México)</StatusButton>
            <Spacer />
            <StatusButton $mr={20}>
              <Svg w={10} h={10}><path d="M0 5.500h10M0 8.500h10" /><path d="M2.500 3.500L5 .5l2.500 3z" fill="#666" stroke="none" /></Svg>
              Notas
            </StatusButton>
            <StatusButton $mr={16}>
              <Svg w={11} h={11}><path d="M0 0h11v8H5l-2 3V8H0z" fill="#777" stroke="none" /></Svg>
              Comentarios
            </StatusButton>
            <StatusButton $w={33} $on aria-label="Normal">
              <Svg w={13} h={11}><path d="M.5.5h12v10H.5zM3.500.5v10M6 3.500h4v3H6zM3.500 8.500h9" /></Svg>
            </StatusButton>
            <StatusButton $w={33} aria-label="Clasificador">
              <Svg w={13} h={11}><path d="M.5.5h4v3h-4zM8.500.5h4v3h-4zM.5 7.500h4v3h-4zM8.500 7.500h4v3h-4z" /></Svg>
            </StatusButton>
            <StatusButton $w={33} aria-label="Vista de lectura">
              <Svg w={12} h={11}><path d="M6 1.500v9M.5.5H5l1 1 1-1h4.500v9H.5zM2 3h2.500M2 5h2.500M2 7h2.500M7.500 3H10M7.500 5H10M7.500 7H10" /></Svg>
            </StatusButton>
            <StatusButton $w={33} aria-label="Presentación">
              <Svg w={12} h={11}><path d="M0 1h12M1.500 1v5.500h9V1M6 6.500V10M3.500 10.500h5" strokeWidth="1.200" /></Svg>
            </StatusButton>
            <StatusButton $w={10} aria-label="Alejar">
              <Svg w={6} h={7}><path d="M0 4h6" strokeWidth="1.600" stroke="#333" /></Svg>
            </StatusButton>
            <Zoom type="range" aria-label="Zoom" min={0} max={100} defaultValue={33} />
            <StatusButton $w={8} $mr={13} aria-label="Acercar">
              <Svg w={7} h={7}><path d="M0 3.500h7M3.500 0v7" strokeWidth="1.400" stroke="#333" /></Svg>
            </StatusButton>
            <StatusButton $mr={10}>69 %</StatusButton>
            <StatusButton $w={11} aria-label="Ajustar a la ventana">
              <Svg w={11} h={11}><path d="M11 .5H.5v10H11M3 5V3h2M3 3l3 3M9 3h2M3 7v2" /></Svg>
            </StatusButton>
          </StatusRow>
        </Status>
      </Window>
    </Page>
  );
}
